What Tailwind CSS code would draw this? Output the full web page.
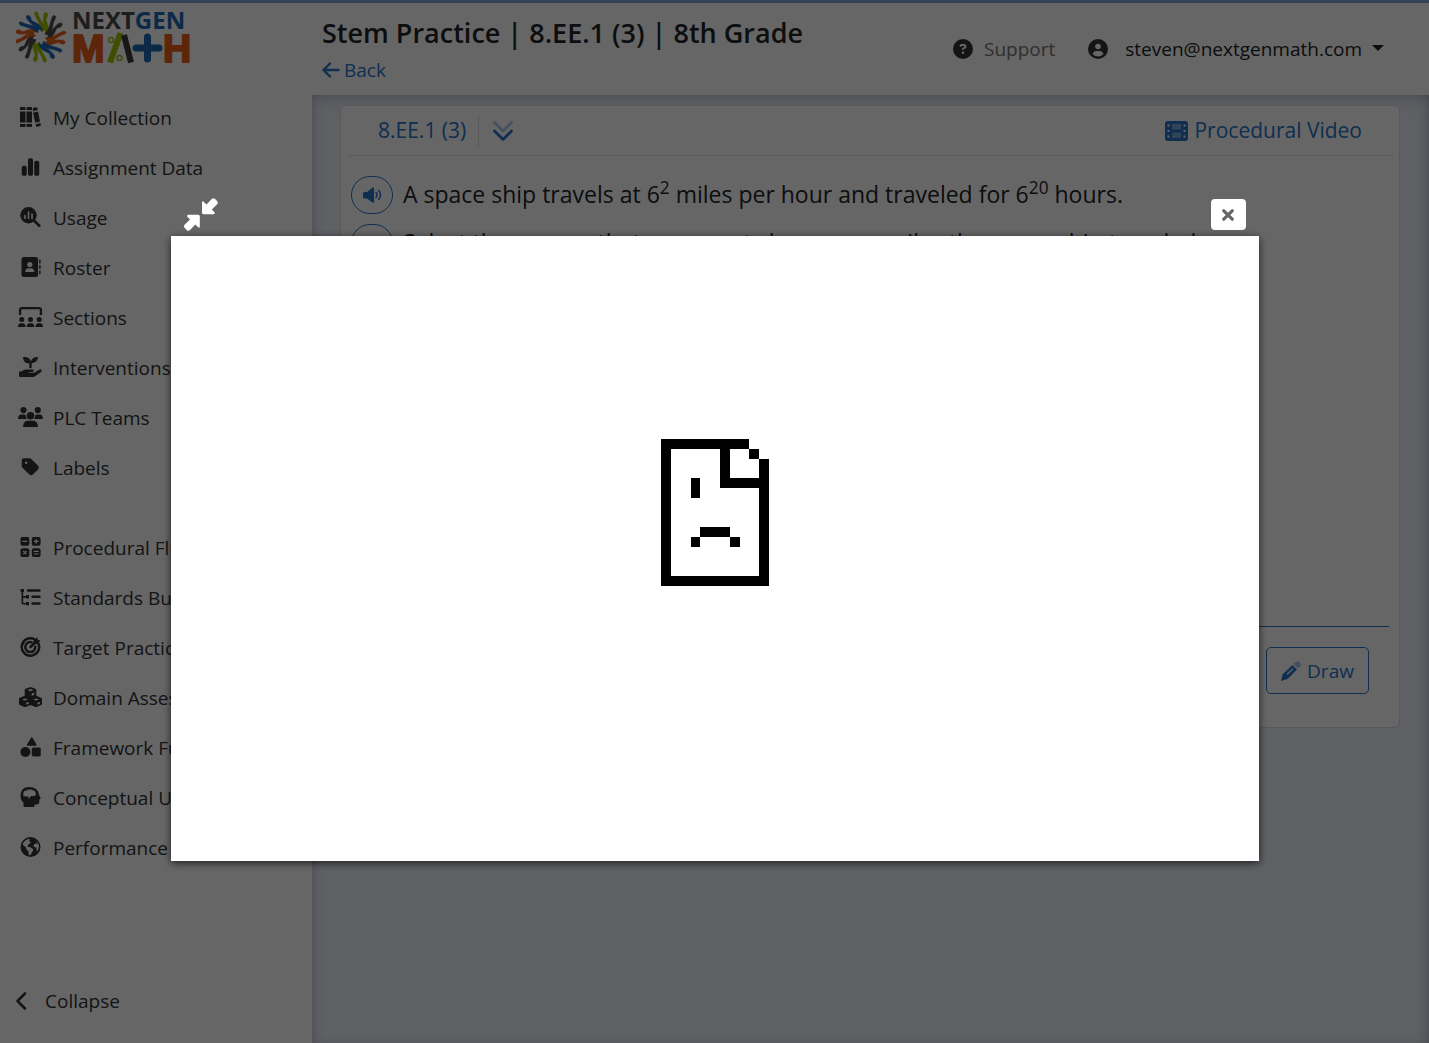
<!DOCTYPE html>
<html lang="en">
<head>
<meta charset="utf-8">
<meta name="viewport" content="width=device-width, initial-scale=1">
<title>Stem Practice | 8.EE.1 (3) | 8th Grade</title>
<script src="https://cdn.jsdelivr.net/npm/@tailwindcss/browser@4"></script>
</head>
<body class="font-['Segoe_UI','Open_Sans','Noto_Sans',sans-serif] text-[#212529] bg-white">
<div class="flex min-h-screen border-t-3 border-[#7da7e1]">

  <aside class="flex w-[312px] shrink-0 flex-col bg-white pl-4 text-[#333]">
    <a href="#" aria-label="NextGen Math" class="block h-[72px] w-[184px]">
      <svg viewBox="0 -8 184 72" class="h-[72px] w-[184px]">
        <defs>
          <g id="petal" stroke="currentColor" stroke-width=".6"><path d="M5 -3C6 -9 2 -13 3 -20C3 -25 6 -26 7 -23C8 -20 5 -20 5.500 -17C7 -12 10 -8 5 -3Z"/><path d="M1 -5C1 -11 -2 -15 -4 -19L-6 -23C-6 -26 -3 -26 -2.500 -23C-1 -17 6 -11 7 -4L4 -7Z"/></g>
        </defs>
        <g transform="translate(24.500 26)">
          <g fill="#a4c400" color="#a4c400"><use href="#petal"/><use href="#petal" transform="rotate(180)"/></g>
          <g fill="#4a4a4a" color="#4a4a4a"><use href="#petal" transform="rotate(45)"/><use href="#petal" transform="rotate(-135)"/></g>
          <g fill="#e8601c" color="#e8601c"><use href="#petal" transform="rotate(90)"/><use href="#petal" transform="rotate(-90)"/></g>
          <g fill="#2069b4" color="#2069b4"><use href="#petal" transform="rotate(135)"/><use href="#petal" transform="rotate(-45)"/></g>
          <circle r="4.500" fill="#fff"/>
        </g>
        <text x="56" y="18" font-family="Open Sans, sans-serif" font-weight="700" font-size="24" fill="#4a4a4a">NEXT<tspan fill="#2069b4">GEN</tspan></text>
        <g font-family="Liberation Sans, sans-serif" font-weight="700" font-size="39" fill="#e8601c" stroke="#e8601c" stroke-width="2" stroke-linejoin="round">
          <text x="56" y="51">M</text>
          <text x="147" y="51">H</text>
        </g>
        <g fill="none" stroke-width="6">
          <path stroke="#a4c400" d="M94 51.500L104.500 22"/>
          <path stroke="#3b3b3b" d="M108 24L115 51.500"/>
          <path stroke="#2069b4" stroke-width="7" stroke-linecap="round" d="M120 37H143M131.500 26V48"/>
        </g>
        <g fill="none" stroke="#a4c400" stroke-width="1.500"><circle cx="95" cy="29" r="2.500"/><circle cx="103.500" cy="47" r="2.500"/></g>
      </svg>
    </a>

    <nav class="mt-[18px] flex flex-col text-[19px]">
      <a href="#" class="flex h-[50px] items-center gap-[10px]"><svg viewBox="0 0 25 20" class="mb-[2px] ml-[2px] h-5 w-[25px]" fill="currentColor"><path d="M3 0H6.500Q7.500 0 7.500 1V3H2V1Q2 0 3 0ZM2 4.500H7.500V15.500H2ZM2 17H7.500V19Q7.500 20 6.500 20H3Q2 20 2 19ZM9.500 0H13Q14 0 14 1V3H8.500V1Q8.500 0 9.500 0ZM8.500 4.500H14V15.500H8.500ZM8.500 17H14V19Q14 20 13 20H9.500Q8.500 20 8.500 19ZM15 1L18 .2Q19 0 19.300 1L19.700 3L14.900 4.200V1.200ZM15 5.700L20 4.400L22 14.500L17.300 15.700ZM17.700 17.200L22.300 16L22.800 17.500Q23 18.700 22 19L19.500 19.700Q18.300 20 18 18.800Z"/></svg>My Collection</a>
      <a href="#" class="flex h-[50px] items-center gap-[10px]"><svg viewBox="0 0 448 512" class="mb-[2px] ml-[2px] h-5 w-[25px]" fill="currentColor"><path d="M160 80c0-26.500 21.500-48 48-48h32c26.500 0 48 21.500 48 48V432c0 26.500-21.500 48-48 48H208c-26.500 0-48-21.500-48-48V80zM0 272c0-26.500 21.500-48 48-48H80c26.500 0 48 21.500 48 48V432c0 26.500-21.500 48-48 48H48c-26.500 0-48-21.500-48-48V272zM368 96h32c26.500 0 48 21.500 48 48V432c0 26.500-21.500 48-48 48H368c-26.500 0-48-21.500-48-48V144c0-26.500 21.500-48 48-48z"/></svg>Assignment Data</a>
      <a href="#" class="flex h-[50px] items-center gap-[10px]"><svg viewBox="0 0 25 20" class="mb-[2px] ml-[2px] h-5 w-[25px]" fill="currentColor"><circle cx="10.500" cy="8.200" r="8.200"/><path d="M15.500 13L21.300 18.700" stroke="currentColor" stroke-width="2.600" stroke-linecap="round"/><path d="M7 8.500V11.500M10.500 5V11.500M14 7V11.500" stroke="#fff" stroke-width="1.600" stroke-linecap="round"/></svg>Usage</a>
      <a href="#" class="flex h-[50px] items-center gap-[10px]"><svg viewBox="0 0 25 20" class="mb-[2px] ml-[2px] h-5 w-[25px]" fill="currentColor"><rect x="3.500" width="16.500" height="20" rx="2.500"/><path d="M21.200 2.500H22Q22.600 2.500 22.600 3.200V6.500H21.200ZM21.200 8H22.600V12H21.200ZM21.200 13.500H22.600V16.500Q22.600 17.200 22 17.200H21.200Z"/><circle cx="11.800" cy="7.500" r="2.600" fill="#fff"/><path fill="#fff" d="M7.200 15Q7.500 11.300 10.500 11.300H13Q16 11.300 16.400 15Z"/></svg>Roster</a>
      <a href="#" class="flex h-[50px] items-center gap-[10px]"><svg viewBox="0 0 25 20" class="mb-[2px] ml-[2px] h-5 w-[25px]" fill="currentColor"><path d="M2.100 8V3Q2.100 1.200 4 1.200H21Q22.900 1.200 22.900 3V8" fill="none" stroke="currentColor" stroke-width="2.300"/><circle cx="3.800" cy="12.500" r="2.500"/><circle cx="12.500" cy="12.500" r="2.500"/><circle cx="21.200" cy="12.500" r="2.500"/><path d="M0 20Q0 16.300 3 16.300H4.600Q7.500 16.300 7.500 20ZM8.700 20Q8.700 16.300 11.700 16.300H13.300Q16.300 16.300 16.300 20ZM17.500 20Q17.500 16.300 20.400 16.300H22Q25 16.300 25 20Z"/></svg>Sections</a>
      <a href="#" class="flex h-[50px] items-center gap-[10px]"><svg viewBox="0 0 25 20" class="mb-[2px] ml-[2px] h-5 w-[25px]" fill="currentColor"><path d="M5 0H7.500Q12 .5 12.800 4.500Q14 .5 18.500 0H20Q19.800 5.300 13.700 6.200V10.500Q13.700 11.300 12.500 11.300Q11.300 11.300 11.300 10.500V6.500Q5 6.300 5 0Z"/><path d="M1 14.500H3.500L5.500 13.100Q6.500 12.500 8 12.500H14.500Q16 12.700 15.700 14Q15.500 15 14.500 15H11Q10.300 15.200 11 15.800H15.500Q16.500 15.800 17.500 15L21.500 12.500Q23 12 23.500 13.200Q23.800 14.200 23 14.900L17.500 19Q16.300 20 14.500 20H2Q1 20 1 19Z"/></svg>Interventions</a>
      <a href="#" class="flex h-[50px] items-center gap-[10px]"><svg viewBox="0 0 25 20" class="mb-[2px] ml-[2px] h-5 w-[25px]" fill="currentColor"><circle cx="5.500" cy="3.100" r="3.100"/><circle cx="19.800" cy="3.100" r="3.100"/><circle cx="12.500" cy="8.700" r="3.800"/><path d="M0 11.800Q.2 7.500 3.500 7.500H6Q7 7.500 7.700 8Q7.500 10.300 9 12H.5Q0 12 0 11.800ZM25 11.800Q24.800 7.500 21.500 7.500H19Q18 7.500 17.300 8Q17.500 10.300 16 12H24.500Q25 12 25 11.800ZM5 19.500Q5.500 13.700 10 13.700H15Q19.500 13.700 20 19.500Q20 20 19.300 20H5.700Q5 20 5 19.500Z"/></svg>PLC Teams</a>
      <a href="#" class="flex h-[50px] items-center gap-[10px]"><svg viewBox="0 0 448 512" class="mb-[2px] ml-[2px] h-5 w-[25px]" fill="currentColor"><path d="M0 80V229.500c0 17 6.700 33.300 18.700 45.300l176 176c25 25 65.500 25 90.500 0L418.700 317.300c25-25 25-65.500 0-90.500l-176-176c-12-12-28.300-18.700-45.300-18.700H48C21.500 32 0 53.500 0 80zm112 32a32 32 0 1 1 0 64 32 32 0 1 1 0-64z"/></svg>Labels</a>

      <a href="#" class="mt-[30px] flex h-[50px] items-center gap-[10px]"><svg viewBox="0 0 25 20" class="mb-[2px] ml-[2px] h-5 w-[25px]" fill="currentColor"><rect x="2.500" width="8.800" height="8.800" rx="2"/><rect x="13.800" width="8.800" height="8.800" rx="2"/><rect x="2.500" y="11.200" width="8.800" height="8.800" rx="2"/><rect x="13.800" y="11.200" width="8.800" height="8.800" rx="2"/><path d="M4.500 4.400H9.300M15.800 4.400H20.600M18.200 2V6.800M5.300 14L8.500 17.200M8.500 14L5.300 17.200M15.800 14.400H20.600M15.800 17H20.600" stroke="#fff" stroke-width="1.200"/></svg>Procedural Fluency</a>
      <a href="#" class="flex h-[50px] items-center gap-[10px]"><svg viewBox="0 0 25 20" class="mb-[2px] ml-[2px] h-5 w-[25px]" fill="currentColor"><path d="M2.500 2H6V5H5.200V9H8V8H11V11.500H8V10.800H5.200V16H8V15H11V18.200H8V17.500H5Q3.500 17.500 3.500 16V5H2.500Z"/><path d="M10 3.500H21.500M14.500 9.800H21.500M14.500 16.500H21.500" stroke="currentColor" stroke-width="2.400" stroke-linecap="round"/></svg>Standards Builder</a>
      <a href="#" class="flex h-[50px] items-center gap-[10px]"><svg viewBox="0 0 25 20" class="mb-[2px] ml-[2px] h-5 w-[25px]" fill="none" stroke="currentColor" stroke-width="2.500" stroke-linecap="round"><path d="M16.300 2.200A8.700 8.700 0 1 0 20.500 6.700M13.500 5.200A5 5 0 1 0 17.300 9.800"/><path d="M12.500 10L17 5.500"/><path fill="currentColor" stroke="none" d="M15.300 4L18.500 .7Q19.300 .2 19.500 1L19.800 2.900L21.800 3.300Q22.500 3.600 22 4.300L18.800 7.300L15.800 7Z"/></svg>Target Practice</a>
      <a href="#" class="flex h-[50px] items-center gap-[10px]"><svg viewBox="0 0 25 20" class="mb-[2px] ml-[2px] h-5 w-[25px]" fill="currentColor"><path d="M12.500 0L17.500 1.800Q18.300 2.200 18.300 3V8.800L23 10.700Q24 11.200 24 12V16.800Q24 17.600 23.200 18L18.500 20Q18 20.200 17.500 20L12.500 17.900L7.500 20Q7 20.200 6.500 20L1.800 18Q1 17.600 1 16.800V12Q1 11.200 1.800 10.800L6.700 8.800V3Q6.700 2.200 7.500 1.800Z"/><path d="M9.500 3.100L12.500 4.200L15.500 3.100L12.500 2.100ZM13.700 6.400L16.200 5.400V7.800L13.700 8.900ZM4 12.500L6.900 13.600L9.800 12.500L6.900 11.400ZM15.200 12.500L18.100 13.600L21 12.500L18.100 11.400ZM8.200 15.700L10.600 14.700V16.800L8.200 17.800ZM19.400 15.700L21.900 14.700V16.800L19.400 17.800Z" fill="#fff"/></svg>Domain Assessments</a>
      <a href="#" class="flex h-[50px] items-center gap-[10px]"><svg viewBox="0 0 25 20" class="mb-[2px] ml-[2px] h-5 w-[25px]" fill="currentColor"><path d="M13 .7Q13.700-.3 14.400 .7L18.500 7.400Q19 8.600 17.800 8.700H9.600Q8.400 8.600 9 7.400Z"/><circle cx="7.400" cy="15" r="5"/><rect x="13.800" y="10.500" width="9" height="9" rx="1.700"/></svg>Framework Fundamentals</a>
      <a href="#" class="flex h-[50px] items-center gap-[10px]"><svg viewBox="0 0 25 20" class="mb-[2px] ml-[2px] h-5 w-[25px]" fill="currentColor"><path d="M11 0Q20 0 21 8L22.600 11Q22.800 12.200 21.300 12.500V15Q21.300 17.500 18.700 17.500H16.500V19Q16.500 20 15.500 20H6.500Q5.500 20 5.500 19V15.500Q2.500 13 2.500 9Q2.500 0 11 0Z"/><path d="M8.800 3.500Q10 2 11.700 2.800Q13.500 1.900 14.700 3.200Q17 3.200 17.300 5.200Q19 7.500 16.500 9H13L10.500 12.200V9.500H7Q4.500 9 5.300 6.800Q5.300 3.500 8.800 3.500Z" fill="#fff"/></svg>Conceptual Understanding</a>
      <a href="#" class="flex h-[50px] items-center gap-[10px]"><svg viewBox="0 0 25 20" class="mb-[2px] ml-[2px] h-5 w-[25px]" fill="currentColor"><circle cx="12.500" cy="10" r="10"/><path d="M4.500 7.500Q6 3 10.500 2L12 2.500L11 4L13 5.500L10.500 7.500L9 9.500L12.500 10.300L15.500 12.500L14 15.500L12 18.500L10.800 18L10.500 14.500L8.500 12.500L8 10.500ZM15.500 2.500Q19 4 20 7L17.500 6.500L15.500 8L16 10L18.500 10.500L18.500 14.500Q21.500 12 20.800 8L19.500 5Z" fill="#fff"/></svg>Performance Tasks</a>
    </nav>

    <button type="button" class="mt-auto mb-[17px] flex h-[50px] items-center gap-[18px] text-[19px]"><svg viewBox="0 0 11 18" class="h-[18px] w-[11px]" fill="none" stroke="currentColor" stroke-width="2.500" stroke-linecap="round" stroke-linejoin="round"><path d="M9 1.500L1.500 9L9 16.500"/></svg>Collapse</button>
  </aside>

  <div class="flex min-w-0 grow flex-col">
    <header class="flex h-[92px] shrink-0 items-start justify-between bg-white pr-[45px] pl-[10px]">
      <div class="pt-3">
        <h1 class="text-[27px] leading-9 font-semibold whitespace-nowrap">Stem Practice | 8.EE.1 (3) | 8th Grade</h1>
        <a href="#" class="flex h-[38px] items-center gap-1 text-[19px] text-[#2674c8]"><svg viewBox="0 0 18 16" class="h-4 w-[18px]" fill="none" stroke="currentColor" stroke-width="2.400" stroke-linecap="round" stroke-linejoin="round"><path d="M16.500 8H1.500M8 1.500L1.500 8L8 14.500"/></svg>Back</a>
      </div>
      <div class="flex h-[92px] items-center text-[19px] whitespace-nowrap">
        <a href="#" class="flex items-center gap-[11px] text-[#777]"><svg viewBox="0 0 512 512" class="size-5 fill-[#333]"><path d="M256 512A256 256 0 1 0 256 0a256 256 0 1 0 0 512zM169.800 165.300c7.900-22.300 29.100-37.300 52.800-37.300h58.300c34.900 0 63.100 28.300 63.100 63.100c0 22.600-12.100 43.500-31.700 54.800L280 264.400c-.2 13-10.900 23.600-24 23.600c-13.300 0-24-10.700-24-24V250.500c0-8.600 4.600-16.500 12.100-20.800l44.300-25.400c4.700-2.700 7.600-7.700 7.600-13.100c0-8.400-6.800-15.100-15.100-15.100H222.600c-3.400 0-6.400 2.100-7.500 5.300l-.4 1.200c-4.400 12.500-18.200 19-30.600 14.600s-19-18.200-14.600-30.600l.4-1.200zM224 352a32 32 0 1 1 64 0 32 32 0 1 1 -64 0z"/></svg>Support</a>
        <button type="button" class="ml-[33px] flex items-center"><svg viewBox="0 0 20 20" class="size-5 fill-[#333]"><circle cx="10" cy="10" r="10"/><circle cx="10" cy="7.500" r="2.800" fill="#fff"/><path fill="#fff" d="M4.500 15Q5.500 12 8.500 12H11.500Q14.500 12 15.500 15Q13 17.500 10 17.500Q7 17.500 4.500 15Z"/></svg><span class="ml-[17px]">steven@nextgenmath.com</span><svg viewBox="0 0 12 6" class="mb-[2px] ml-[10px] h-[6px] w-3" fill="currentColor"><path d="M0 0H12L6 6Z"/></svg></button>
      </div>
    </header>

    <main class="grow bg-[#ebeff8] pt-[10px] pr-[29px] pl-7 shadow-[inset_0_8px_16px_-6px_rgba(60,70,100,0.250),inset_-8px_0_14px_-8px_rgba(60,60,90,0.250),inset_6px_0_12px_-6px_rgba(60,60,90,0.200)]">
      <section class="flex h-[623px] flex-col rounded-[5px] border border-[#d9dde5] bg-white px-[6px]">
        <div class="flex h-[50px] shrink-0 items-center justify-between border-b border-[#e3e3e3] pr-[31px] pl-[31px] text-[21px] text-[#2674c8]">
          <div class="flex items-center">
            <a href="#">8.EE.1 (3)</a>
            <span class="mx-3 h-8 w-px bg-[#ddd]"></span>
            <button type="button" aria-label="Expand" class="ml-[2px]"><svg viewBox="0 0 20 20" class="size-5" fill="none" stroke="currentColor" stroke-width="2.800" stroke-linecap="round" stroke-linejoin="round"><path opacity=".4" d="M1.500 1.500L10 10L18.500 1.500"/><path d="M1.500 10L10 18.500L18.500 10"/></svg></button>
          </div>
          <a href="#" class="flex items-center gap-[6px]"><svg viewBox="0 0 23 20" class="h-5 w-[23px]"><rect width="23" height="20" rx="3" fill="#2674c8"/><path fill="#7ba8d8" d="M7 3H16V8.500H7ZM7 11.500H16V17H7Z"/><path fill="#fff" d="M2.500 3.500H4.500V5.500H2.500ZM2.500 9H4.500V11H2.500ZM2.500 14.500H4.500V16.500H2.500ZM18.500 3.500H20.500V5.500H18.500ZM18.500 9H20.500V11H18.500ZM18.500 14.500H20.500V16.500H18.500Z"/></svg>Procedural Video</a>
        </div>
        <div class="flex flex-col gap-[10px] pt-5 pl-1 text-[23px] leading-9">
          <div class="flex items-start gap-[10px]">
            <button type="button" aria-label="Read aloud" class="flex h-[38px] w-[42px] items-center justify-center rounded-full border border-[#2674c8] text-[#2674c8]"><svg viewBox="0 0 19 16" class="h-4 w-[19px]" fill="currentColor"><path d="M1.500 5H4L9.500 .5Q11 0 11 1V15Q11 16 9.500 15.500L4 11.500H1.500Q0 11.500 0 10V6.500Q0 5 1.500 5Z"/><path d="M13 5.500Q15 8 13 10.500M15.700 3.500Q19.500 8 15.700 12.500" fill="none" stroke="currentColor" stroke-width="1.500" stroke-linecap="round"/></svg></button>
            <p>A space ship travels at 6<sup>2</sup> miles per hour and traveled for 6<sup>20</sup> hours.</p>
          </div>
          <div class="flex items-start gap-[10px]">
            <button type="button" aria-label="Read aloud" class="h-[38px] w-[42px] rounded-full border border-[#2674c8]"></button>
            <p>Select the answer that represents how many miles the space ship traveled.</p>
          </div>
        </div>
        <div class="mx-1 mt-auto flex justify-end border-t border-[#2674c8] pt-5 pr-5 pb-[33px]">
          <button type="button" class="flex h-[47px] w-[103px] items-center justify-center gap-[6px] rounded-[5px] border border-[#2674c8] pt-[2px] text-[19px] text-[#2674c8]"><svg viewBox="0 0 20 20" class="mb-[2px] size-5" fill="currentColor"><path opacity=".4" d="M12.500 3L14.500 1Q16.500-.7 18.400 1.100L19 1.700Q20.700 3.500 19 5.500L17 7.500Z"/><path d="M11.500 4L16 8.500L6.500 18L0 20L1.500 13.500Z"/><path d="M6 13.500L12 7.500" stroke="#fff" stroke-width="1.100"/></svg>Draw</button>
        </div>
      </section>
    </main>
  </div>
</div>

<div role="dialog" aria-modal="true" aria-label="Procedural Video" class="fixed inset-0 flex items-center justify-center bg-black/60">
  <div class="flex w-full max-w-[1088px] flex-col">
    <div class="flex h-[54px] items-end justify-between pr-[13px] pb-[3px] pl-3">
      <button type="button" aria-label="Shrink" class="text-white"><svg viewBox="0 0 36 36" class="size-9" fill="currentColor"><path d="M20.300 4.500L23.500 7.500L28.800 2Q30.300 .5 31.800 1.800L34.300 4.300Q35.700 5.700 34.200 7.200L28.800 12.500L31.500 15.300Q32.300 16.700 30.800 17.200H20.500Q19 17 19 15.700V5.300Q19.300 4 20.300 4.500ZM15.500 30.500L12.300 27.500L7 33Q5.500 34.500 4 33.200L1.500 30.700Q.1 29.300 1.600 27.800L7 22.500L4.300 19.700Q3.500 18.300 5 17.800H15.300Q16.800 18 16.800 19.300V29.700Q16.500 31 15.500 30.500Z"/></svg></button>
      <button type="button" aria-label="Close" class="mb-[3px] flex h-[31px] w-[35px] items-center justify-center rounded-[4px] bg-white text-[#666]"><svg viewBox="0 0 12 12" class="size-3" fill="none" stroke="currentColor" stroke-width="3.200" stroke-linecap="round"><path d="M1.800 1.800L10.200 10.200M10.200 1.800L1.800 10.200"/></svg></button>
    </div>
    <div class="flex h-[625px] items-center justify-center bg-white pb-[72px] shadow-[0_2px_8px_rgba(0,0,0,0.700)]">
      <svg viewBox="0 0 11 15" class="h-[147px] w-[108px] fill-black" shape-rendering="crispEdges" role="img" aria-label="Page could not be loaded"><path d="M0 0H9V1H10V2H11V15H0ZM1 1V14H10V5H6V1ZM7 1V4H10V2H9V1ZM3 4H4V6H3ZM4 9H7V10H4ZM3 10H4V11H3ZM7 10H8V11H7Z" fill-rule="evenodd"/></svg>
    </div>
  </div>
</div>
</body>
</html>
